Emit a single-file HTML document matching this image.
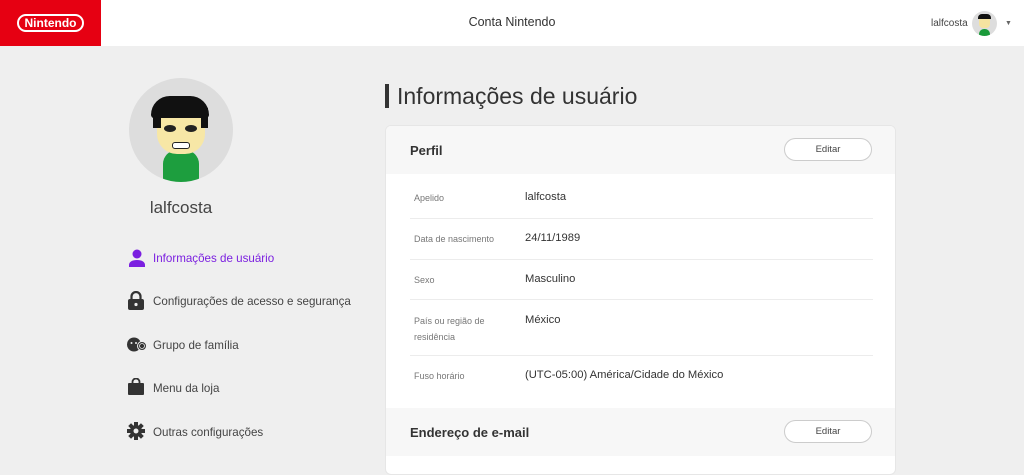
<!DOCTYPE html>
<html><head><meta charset="utf-8"><style>
*{margin:0;padding:0;box-sizing:border-box}
body{width:1024px;height:466px;overflow:hidden;background:#efefef;font-family:"Liberation Sans",sans-serif;color:#333;position:relative}
.hdr{position:absolute;left:0;top:0;width:1024px;height:46px;background:#fff}
.red{position:absolute;left:0;top:0;width:101px;height:46px;background:#e60012}
.logo{position:absolute;left:17px;top:14px;width:67px;height:18px;border:2px solid #fff;border-radius:9px;color:#fff;font-weight:bold;font-size:12px;text-align:center;line-height:14px}
.ttl{position:absolute;left:0;width:1024px;top:15px;text-align:center;font-size:12.5px;color:#333}
.abs{position:absolute}
.menu{position:absolute;left:153px;font-size:11.6px;color:#444}
.card{position:absolute;left:385px;top:125px;width:511px;height:350px;background:#fff;border-radius:6px;border:1px solid #e6e6e6;overflow:hidden}
.ch{position:absolute;left:0;width:511px;height:48px;background:#f7f7f7}
.ch b{position:absolute;left:24px;top:17px;font-size:13px;color:#333}
.btn{position:absolute;left:398px;top:12px;width:88px;height:23px;border:1px solid #ccc;border-radius:12px;background:#fff;color:#444}
.btn span{position:absolute;left:0;right:0;top:6px;text-align:center;font-size:9.5px;line-height:10px}
.lbl{position:absolute;left:28px;font-size:9px;color:#777;line-height:16px}
.val{position:absolute;left:139px;font-size:11.2px;color:#333}
.dv{position:absolute;left:24px;width:463px;height:1px;background:#ececec}
</style></head><body>
<div class="hdr"></div>
<div class="red"><div class="logo">Nintendo</div></div>
<div class="ttl">Conta Nintendo</div>
<div class="abs" style="left:931px;top:18px;font-size:10px;color:#444">lalfcosta</div>
<div class="abs" style="left:972px;top:11px;width:25px;height:25px;border-radius:50%;background:#ddd;overflow:hidden">
<div class="abs" style="left:7px;top:5px;width:11px;height:12px;background:#f5e3a0;border-radius:4px"></div>
<div class="abs" style="left:6px;top:3px;width:13px;height:5px;background:#111;border-radius:4px 4px 0 0"></div>
<div class="abs" style="left:7px;top:18px;width:11px;height:8px;background:#1a9a3a;border-radius:5px 5px 0 0"></div></div>
<div class="abs" style="left:1005px;top:20px;font-size:7px;color:#666">▼</div>

<div class="abs" style="left:129px;top:78px;width:104px;height:104px;border-radius:50%;background:#ddd;overflow:hidden">
<div class="abs" style="left:34px;top:72px;width:36px;height:32px;background:#1d9e3e;border-radius:14px 14px 0 0"></div>
<div class="abs" style="left:28px;top:30px;width:48px;height:46px;background:#f7e7a6;border-radius:14px 14px 20px 20px"></div>
<div class="abs" style="left:22px;top:18px;width:58px;height:22px;background:#111;border-radius:24px 24px 4px 4px"></div>
<div class="abs" style="left:24px;top:30px;width:8px;height:20px;background:#111"></div>
<div class="abs" style="left:72px;top:30px;width:7px;height:20px;background:#111"></div>
<div class="abs" style="left:35px;top:47px;width:12px;height:7px;background:#222;border-radius:50%"></div>
<div class="abs" style="left:56px;top:47px;width:12px;height:7px;background:#222;border-radius:50%"></div>
<div class="abs" style="left:43px;top:64px;width:18px;height:7px;background:#fff;border:1.5px solid #222;border-radius:3px"></div>
</div>
<div class="abs" style="left:0;width:362px;top:198px;text-align:center;font-size:17px;color:#444">lalfcosta</div>

<svg class="abs" style="left:128px;top:249px" width="18" height="18" viewBox="0 0 18 18"><circle cx="9" cy="5" r="4.5" fill="#7b1fe0"/><path d="M1 18v-2c0-3 3-5 8-5s8 2 8 5v2z" fill="#7b1fe0"/></svg>
<div class="menu" style="top:252px;color:#7b1fe0">Informações de usuário</div>
<svg class="abs" style="left:128px;top:291px" width="16" height="19" viewBox="0 0 16 19"><path d="M3.5 8V5.5a4.5 4.5 0 0 1 9 0V8" stroke="#333" stroke-width="2.2" fill="none"/><rect x="0" y="8" width="16" height="11" rx="2" fill="#333"/><circle cx="8" cy="13.5" r="1.6" fill="#efefef"/></svg>
<div class="menu" style="top:295px">Configurações de acesso e segurança</div>
<svg class="abs" style="left:127px;top:337px" width="20" height="16" viewBox="0 0 20 16"><circle cx="7" cy="7.5" r="7" fill="#333"/><circle cx="4.5" cy="6" r="1" fill="#efefef"/><circle cx="9" cy="6" r="1" fill="#efefef"/><circle cx="15" cy="9" r="4.5" fill="#333" stroke="#efefef" stroke-width="1"/><circle cx="15" cy="9" r="2.5" fill="none" stroke="#efefef" stroke-width=".8"/></svg>
<div class="menu" style="top:339px">Grupo de família</div>
<svg class="abs" style="left:128px;top:378px" width="16" height="17" viewBox="0 0 16 17"><path d="M4.5 6V4a3.5 3.5 0 0 1 7 0v2" stroke="#333" stroke-width="1.8" fill="none"/><rect x="0" y="5" width="16" height="12" rx="1" fill="#333"/></svg>
<div class="menu" style="top:382px">Menu da loja</div>
<svg class="abs" style="left:127px;top:422px" width="18" height="18" viewBox="0 0 18 18"><g fill="#333"><circle cx="9" cy="9" r="6"/><rect x="7" y="0" width="4" height="18"/><rect x="0" y="7" width="18" height="4"/><rect x="7" y="0" width="4" height="18" transform="rotate(45 9 9)"/><rect x="7" y="0" width="4" height="18" transform="rotate(-45 9 9)"/></g><circle cx="9" cy="9" r="2.5" fill="#efefef"/></svg>
<div class="menu" style="top:426px">Outras configurações</div>

<div class="abs" style="left:385px;top:84px;width:4px;height:24px;background:#333"></div>
<div class="abs" style="left:397px;top:83px;font-size:23px;color:#333">Informações de usuário</div>

<div class="card">
<div class="ch" style="top:0"><b>Perfil</b><div class="btn"><span>Editar</span></div></div>
<div class="lbl" style="top:64px">Apelido</div><div class="val" style="top:65px">lalfcosta</div>
<div class="dv" style="top:92px"></div>
<div class="lbl" style="top:105px">Data de nascimento</div><div class="val" style="top:106px">24/11/1989</div>
<div class="dv" style="top:133px"></div>
<div class="lbl" style="top:146px">Sexo</div><div class="val" style="top:147px">Masculino</div>
<div class="dv" style="top:173px"></div>
<div class="lbl" style="top:187px">País ou região de<br>residência</div><div class="val" style="top:188px">México</div>
<div class="dv" style="top:229px"></div>
<div class="lbl" style="top:242px">Fuso horário</div><div class="val" style="top:243px">(UTC-05:00) América/Cidade do México</div>
<div class="ch" style="top:282px"><b>Endereço de e-mail</b><div class="btn"><span>Editar</span></div></div>
</div>
</body></html>
